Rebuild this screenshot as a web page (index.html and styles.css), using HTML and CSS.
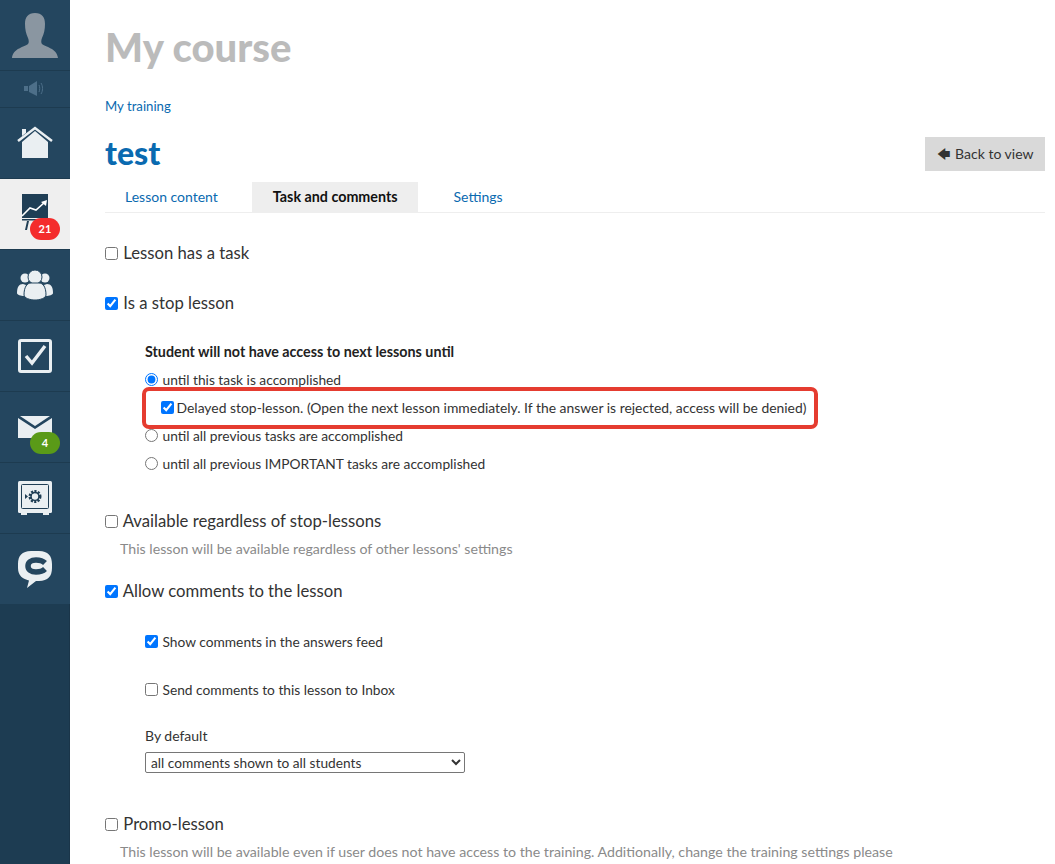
FILE: index.html
```html
<!DOCTYPE html>
<html lang="en">
<head>
    <meta charset="UTF-8">
    <title>My course</title>
    <link rel="stylesheet" href="styles.css">
</head>
<body>
    <nav class="sidebar">
        <div class="side-item side-avatar">
            <svg width="48" height="46" viewBox="0 0 48 46"><path fill="#8a96a1" d="M24 0c-7 0-10 4-10 11 0 5 1 10 3 14 1 2 1 5 0 6-3 3-15 4-16 14h46c-1-10-13-11-16-14-1-1-1-4 0-6 2-4 3-9 3-14C34 4 31 0 24 0z"/></svg>
        </div>
        <div class="side-item side-sound">
            <svg width="22" height="16" viewBox="0 0 22 16"><path fill="#4d6f89" d="M0 5h4v5H0zM5 5l8-5v15l-8-4z"/><path fill="none" stroke="#4d6f89" d="M15 4c1 2 1 5 0 7M17 2c2 3 2 8 0 11"/></svg>
        </div>
        <div class="side-item">
            <svg width="36" height="34" viewBox="0 0 36 34"><path fill="#eaeff2" d="M5 16L18 5l13 11v16H5zM5 3h4v4L5 10z"/><path fill="none" stroke="#eaeff2" stroke-width="2.500" d="M1 15L18 2l17 13"/></svg>
        </div>
        <div class="side-item active">
            <svg width="30" height="44" viewBox="0 0 30 44"><path fill="#1f3e55" d="M2 2h26v24H2z"/><path fill="none" stroke="#fff" stroke-width="1.600" d="M2 24l8-8 6 2 9-8"/><path fill="#fff" d="M21 10l6-2-1 6z"/><path fill="#1f3e55" d="M2 27h24v1.500H2zM7 29h2l-2 9H5z"/></svg>
            <span class="badge badge-red">21</span>
        </div>
        <div class="side-item">
            <svg width="36" height="32" viewBox="0 0 36 32"><g fill="#eaeff2"><circle cx="8" cy="9" r="4.500"/><circle cx="28" cy="9" r="4.500"/><path d="M0 24c0-6 2-9 6-9l3 1-2 11c-3 0-7-1-7-3zM36 24c0-6-2-9-6-9l-3 1 2 11c3 0 7-1 7-3z"/></g><g fill="#eaeff2" stroke="#24465f"><circle cx="18" cy="8" r="7"/><path d="M7 26c0-8 3-12 7-12h8c4 0 7 4 7 12 0 3-6 5-11 5s-11-2-11-5z"/></g></svg>
        </div>
        <div class="side-item">
            <svg width="34" height="34" viewBox="0 0 34 34"><rect x="1.500" y="1.500" width="31" height="31" rx="1.500" fill="none" stroke="#eaeff2" stroke-width="3"/><path fill="none" stroke="#eaeff2" stroke-width="3.400" d="M8 17l6 7L27 7"/></svg>
        </div>
        <div class="side-item">
            <svg width="34" height="22" viewBox="0 0 34 22"><path fill="#eaeff2" d="M0 2l17 11L34 2v20H0zM2 0h30L17 10z"/></svg>
            <span class="badge badge-green">4</span>
        </div>
        <div class="side-item">
            <svg width="34" height="34" viewBox="0 0 34 34"><rect width="34" height="32" rx="1.500" fill="#eaeff2"/><path fill="#eaeff2" d="M3 31h6v3H3zM25 31h6v3h-6z"/><rect x="3.500" y="3.500" width="27" height="24" rx="1" fill="none" stroke="#1f3e55"/><circle cx="17" cy="15.500" r="5" fill="none" stroke="#1f3e55" stroke-width="3" stroke-dasharray="2 1.200"/><circle cx="17" cy="15.500" r="4" fill="none" stroke="#1f3e55" stroke-width="1.500"/><path fill="#1f3e55" d="M7 13l3 2.500L7 18z"/></svg>
        </div>
        <div class="side-item">
            <svg width="34" height="37" viewBox="0 0 34 37"><path fill="#eaeff2" d="M13 0h8c9 0 13 5 13 13v4c0 8-4 13-13 13h-3l-9 7 2-7.500C5 28 0 25 0 17v-4C0 5 4 0 13 0z"/><path fill="none" stroke="#24465f" stroke-width="5.500" d="M27 12c-2-2-5-3-9-3-5 0-8 2.500-8 6s3 6 8 6c4 0 7-1 9-3"/></svg>
        </div>
    </nav>

    <main class="content">
        <h1 class="page-title">My course</h1>
        <a class="crumb" href="#">My training</a>
        <div class="lesson-head">
            <h2 class="lesson-title">test</h2>
            <a class="btn-back" href="#"><span class="arrow">&#129092;</span> Back to view</a>
        </div>
        <ul class="tabs">
            <li><a href="#">Lesson content</a></li>
            <li class="active"><a href="#">Task and comments</a></li>
            <li><a href="#">Settings</a></li>
        </ul>

        <label class="check-main first"><input type="checkbox"> Lesson has a task</label>
        <label class="check-main stop"><input type="checkbox" checked> Is a stop lesson</label>

        <div class="sub stop-options">
            <div class="sub-title">Student will not have access to next lessons until</div>
            <label class="opt"><input type="radio" name="stop" checked> until this task is accomplished</label>
            <label class="opt opt-delayed"><input type="checkbox" checked> Delayed stop-lesson. (Open the next lesson immediately. If the answer is rejected, access will be denied)</label>
            <label class="opt"><input type="radio" name="stop"> until all previous tasks are accomplished</label>
            <label class="opt"><input type="radio" name="stop"> until all previous IMPORTANT tasks are accomplished</label>
        </div>

        <label class="check-main regardless"><input type="checkbox"> Available regardless of stop-lessons</label>
        <p class="hint">This lesson will be available regardless of other lessons' settings</p>

        <label class="check-main comments"><input type="checkbox" checked> Allow comments to the lesson</label>
        <div class="sub comment-options">
            <label class="opt opt-wide"><input type="checkbox" checked> Show comments in the answers feed</label>
            <label class="opt opt-wide"><input type="checkbox"> Send comments to this lesson to Inbox</label>
            <div class="select-label">By default</div>
            <select class="select">
                <option>all comments shown to all students</option>
            </select>
        </div>

        <label class="check-main promo"><input type="checkbox"> Promo-lesson</label>
        <p class="hint">This lesson will be available even if user does not have access to the training. Additionally, change the training settings please</p>
    </main>
</body>
</html>
```

FILE: styles.css
```css
html, body {
    height: 100%;
}
body {
    margin: 0;
    display: flex;
    overflow: hidden;
    background: #fff;
    color: #333;
    font-family: Lato, "Open Sans", sans-serif;
    font-size: 14px;
}
a {
    text-decoration: none;
    color: #0a6ab0;
}

/* left menu */
.sidebar {
    width: 70px;
    flex-shrink: 0;
    background: #1d3c52;
    box-shadow: inset -1px 0 0 #1a3549;
}
.side-item {
    position: relative;
    height: 70px;
    display: flex;
    align-items: center;
    justify-content: center;
    background: #24465f;
    border-bottom: 1px solid #1d3b50;
}
.side-item:last-child {
    border-bottom: none;
}
.side-avatar svg {
    margin-top: 2px;
}
.side-sound {
    height: 36px;
}
.side-item.active {
    background: #efefef;
}
.badge {
    position: absolute;
    left: 30px;
    top: 39px;
    width: 30px;
    height: 22px;
    border-radius: 11px;
    color: #fff;
    font-size: 11px;
    font-weight: 700;
    line-height: 22px;
    text-align: center;
}
.badge-red {
    background: #f42c2c;
}
.badge-green {
    background: #5a9a18;
    top: 40px;
}

/* main column */
.content {
    flex: 1;
    min-width: 0;
    padding: 0 10px 0 35px;
}
.page-title {
    margin: 24px 0 0;
    color: #bbb;
    font-size: 40px;
    line-height: 46px;
    font-weight: 900;
}
.crumb {
    display: block;
    margin-top: 27px;
    font-size: 13.200px;
    line-height: 18px;
}
.lesson-head {
    display: flex;
    justify-content: space-between;
    align-items: center;
    margin-top: 18px;
    height: 40px;
}
.lesson-title {
    margin: 0 0 2px;
    color: #0a6ab0;
    font-size: 32px;
    font-weight: 900;
}
.btn-back {
    background: #d9d9d9;
    color: #333;
    width: 120px;
    height: 34px;
    line-height: 33px;
    text-align: center;
    margin-top: 2px;
}
.arrow {
    font-family: "DejaVu Sans", sans-serif;
    font-size: 13px;
    margin-right: 2px;
}
.tabs {
    display: flex;
    list-style: none;
    margin: 9px 0 0;
    padding: 0;
    height: 30px;
    border-bottom: 1px solid #eee;
}
.tabs a {
    display: block;
    padding: 0 20px;
    line-height: 29px;
}
.tabs .active {
    background: #eee;
    margin: 0 16px 0 14px;
}
.tabs .active a {
    padding-left: 21px;
    color: #111;
    font-size: 14.300px;
    font-weight: 700;
}

/* form */
input[type="checkbox"], input[type="radio"] {
    width: 13px;
    height: 13px;
    margin: 0 1px 0 0;
    vertical-align: -1px;
}
.check-main {
    display: block;
    font-size: 16.700px;
    line-height: 22px;
    color: #333;
}
.first {
    margin-top: 29px;
}
.stop {
    margin-top: 28px;
}
.sub {
    padding-left: 40px;
}
.stop-options {
    margin-top: 28px;
}
.sub-title {
    font-size: 14.300px;
    font-weight: 700;
    line-height: 20px;
    color: #222;
}
.opt {
    display: block;
    height: 28px;
    font-size: 13.750px;
    line-height: 28px;
}
.stop-options .sub-title + .opt {
    margin-top: 4px;
}
.opt-delayed {
    position: relative;
    padding-left: 16px;
    font-size: 13.900px;
}
.opt-delayed input {
    margin-right: -1px;
}
/* red annotation frame over the row */
.opt-delayed::after {
    content: "";
    position: absolute;
    left: -3px;
    top: -7px;
    width: 668px;
    height: 34px;
    border: 4px solid #e53c30;
    border-radius: 7px;
    pointer-events: none;
}
.regardless {
    margin-top: 32px;
}
.hint {
    margin: 7px 0 0 15px;
    color: #8a8a8a;
    font-size: 14.200px;
    line-height: 20px;
}
.comments {
    margin-top: 21px;
}
.comment-options {
    margin-top: 30px;
}
.opt-wide {
    height: 48px;
    line-height: 20px;
}
.opt-wide:last-of-type {
    height: 46px;
}
.select-label {
    line-height: 20px;
}
.select {
    display: block;
    width: 320px;
    height: 21px;
    margin-top: 6px;
    padding-bottom: 2px;
    padding-left: 1px;
    font-family: inherit;
    font-size: 13.700px;
    color: #333;
    background: #fff;
    border: 1px solid #767676;
    border-radius: 2px;
}
.promo {
    margin-top: 40px;
}
```
